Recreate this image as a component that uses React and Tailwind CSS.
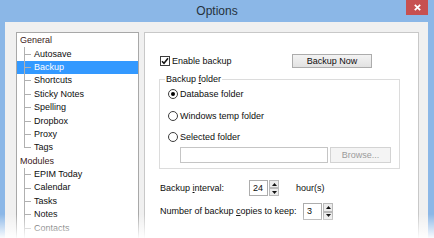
import React from "react";

const general = ["Autosave", "Backup", "Shortcuts", "Sticky Notes", "Spelling", "Dropbox", "Proxy", "Tags"];
const modules = ["EPIM Today", "Calendar", "Tasks", "Notes", "Contacts", "Contacts2"];

function TopRow({ label }) {
  return (
    <div className="flex h-[13.4px] items-center pl-[3px] text-[#3a1818]">
      <span className="leading-none">{label}</span>
    </div>
  );
}

function ChildRow({ label, selected, last }) {
  return (
    <div className={`flex h-[13.4px] ${selected ? "bg-[#3399ff] text-white" : ""}`}>
      <span className="ml-[7px] flex w-[7px] shrink-0 flex-col">
        <span className="flex-1 border-b border-l border-[#b0b0b0]" />
        <span className={`flex-1 border-[#b0b0b0] ${last ? "" : "border-l"}`} />
      </span>
      <span className="ml-[3px] self-center leading-none">{label}</span>
    </div>
  );
}

function Radio({ checked, label }) {
  return (
    <div className="flex h-[12px] items-center pl-[8px]">
      <span className="flex h-[10px] w-[10px] items-center justify-center rounded-full border border-[#3c3c3c] bg-white">
        {checked && <span className="h-[4px] w-[4px] rounded-full bg-black" />}
      </span>
      <span className="ml-[2px] leading-none">{label}</span>
    </div>
  );
}

function Arrow({ up }) {
  return (
    <span className="flex flex-1 items-center justify-center border border-[#b9b9b9] bg-[#ececec]">
      <svg width="5" height="3" viewBox="0 0 5 3">
        {up ? <polygon points="0,3 5,3 2.5,0" fill="#111" /> : <polygon points="0,0 5,0 2.5,3" fill="#111" />}
      </svg>
    </span>
  );
}

function Spinner({ value, h }) {
  return (
    <div className={`flex ${h}`}>
      <span className="flex w-[19px] items-center border border-[#adadad] bg-white pl-[3px] leading-none">{value}</span>
      <span className="ml-[1px] flex w-[10px] flex-col">
        <Arrow up />
        <Arrow />
      </span>
    </div>
  );
}

export default function App() {
  return (
    <div className="relative flex h-[238px] w-[434px] flex-col overflow-hidden bg-[#8bb7e7] font-['Liberation_Sans',Arial,sans-serif] text-[9px] text-[#0d0d0d]">
      <div className="grid h-[22px] shrink-0 grid-cols-[1fr_auto_1fr]">
        <div />
        <div className="flex items-center justify-center text-[12px] text-[#26313d]">Options</div>
        <div className="flex justify-end pr-[6px]">
          <div className="flex h-[15px] w-[22px] items-center justify-center bg-[#c75050]">
            <svg width="7" height="7" viewBox="0 0 7 7">
              <path d="M0.8 0.8 L6.2 6.2 M6.2 0.8 L0.8 6.2" stroke="#fff" strokeWidth="1.7" />
            </svg>
          </div>
        </div>
      </div>

      <div className="ml-[5px] mr-[6px] flex flex-1 gap-[5px] bg-[#f0f0f0] pl-[11px] pt-[10px]">
        <div className="w-[123px] shrink-0 overflow-hidden border border-b-0 border-[#a8a8a8] bg-white pt-[1px]">
          <TopRow label="General" />
          {general.map((g, i) => (
            <ChildRow key={g} label={g} selected={g === "Backup"} last={i === general.length - 1} />
          ))}
          <TopRow label="Modules" />
          {modules.map((m) => (
            <ChildRow key={m} label={m === "Contacts2" ? "" : m} />
          ))}
        </div>

        <div className="w-[275px] shrink-0 border border-b-0 border-[#c8c8c8] bg-white pl-[14px] pt-[21px]">
          <div className="flex h-[14px] items-center">
            <div className="flex w-[133px] items-center">
              <span className="ml-[1px] flex h-[10px] w-[10px] items-center justify-center border border-[#3c3c3c] bg-white">
                <svg width="8" height="8" viewBox="0 0 8 8">
                  <path d="M1 4.2 L3 6.3 L7 1.3" stroke="#111" strokeWidth="1.5" fill="none" />
                </svg>
              </span>
              <span className="ml-[2px] leading-none">Enable backup</span>
            </div>
            <button className="flex h-[14px] w-[80px] items-center justify-center border border-[#acacac] bg-linear-to-b from-[#f3f3f3] to-[#e2e2e2] leading-none">
              Backup Now
            </button>
          </div>

          <fieldset className="mt-[5px] w-[241px] border border-[#dcdcdc] p-0 pb-[5px]">
            <legend className="ml-[5px] px-[1px] leading-[12px]">
              Backup <span className="underline">f</span>older
            </legend>
            <div className="mt-[3px] flex flex-col gap-[10px]">
              <Radio checked label="Database folder" />
              <Radio label="Windows temp folder" />
            </div>
            <div className="mt-[9px]">
              <Radio label="Selected folder" />
            </div>
            <div className="ml-[20px] mt-[4px] flex h-[16px]">
              <div className="w-[148px] border border-[#c5c5c5] bg-white" />
              <div className="ml-[2px] flex w-[61px] items-center justify-center border border-[#d3d3d3] bg-[#f4f4f4] leading-none text-[#9b9b9b]">
                Browse...
              </div>
            </div>
          </fieldset>

          <div className="mt-[11px] flex h-[16px] items-center">
            <span className="w-[90px] pl-[1px] leading-none">
              Backup <span className="underline">i</span>nterval:
            </span>
            <Spinner value="24" h="h-[16px]" />
            <span className="ml-[17px] leading-none">hour(s)</span>
          </div>

          <div className="mt-[7px] flex h-[17px] items-center">
            <span className="w-[144px] pl-[1px] leading-none">
              Number of backup <span className="underline">c</span>opies to keep:
            </span>
            <Spinner value="3" h="h-[17px]" />
          </div>
        </div>
      </div>

      <div className="pointer-events-none absolute bottom-0 left-0 right-0 h-[24px] bg-linear-to-b from-white/0 to-white/95" />
    </div>
  );
}
